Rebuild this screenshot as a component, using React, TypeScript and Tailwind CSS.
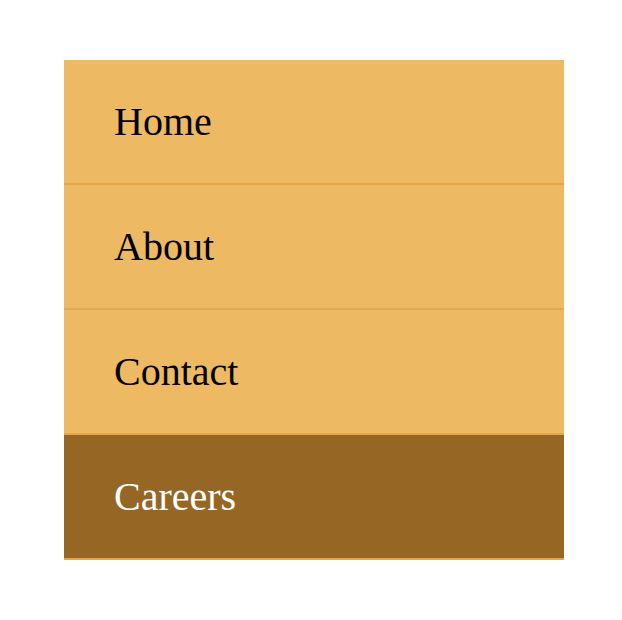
const ITEMS = [
  { label: 'Home', active: false },
  { label: 'About', active: false },
  { label: 'Contact', active: false },
  { label: 'Careers', active: true },
]

export default function App() {
  return (
    <div className="w-[622px] h-[620px] bg-white pt-[60px] pl-[64px]">
      <ul className="w-[500px] font-['Liberation_Serif',serif]">
        {ITEMS.map(({ label, active }) => (
          <li
            key={label}
            className={`h-[125px] flex items-center pl-[50px] border-b-2 border-[#e3a84c] text-[40px] ${
              active ? 'bg-[#966724] text-white' : 'bg-[#eeb963] text-black'
            }`}
          >
            {label}
          </li>
        ))}
      </ul>
    </div>
  )
}
